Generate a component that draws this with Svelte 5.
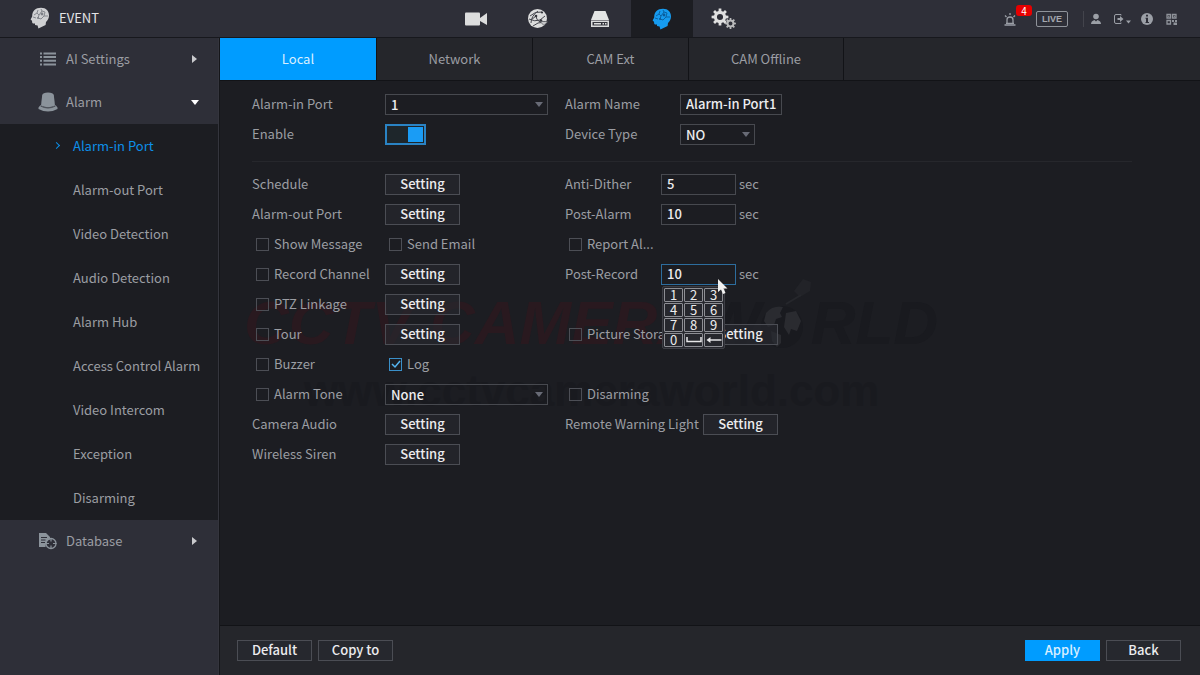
<script lang="ts">
	const menu = [
		'Alarm-in Port',
		'Alarm-out Port',
		'Video Detection',
		'Audio Detection',
		'Alarm Hub',
		'Access Control Alarm',
		'Video Intercom',
		'Exception',
		'Disarming'
	];
	const tabs = ['Local', 'Network', 'CAM Ext', 'CAM Offline'];
	const keys = ['1', '2', '3', '4', '5', '6', '7', '8', '9', '0', 'space', 'back'];

	let page = $state('Alarm-in Port');
	let tab = $state('Local');
	let enabled = $state(true);
	let antiDither = $state('5');
	let postAlarm = $state('10');
	let postRecord = $state('10');

	function press(key: string) {
		if (key === 'back') postRecord = postRecord.slice(0, -1);
		else if (key === 'space') postRecord += ' ';
		else postRecord += key;
	}

	// outline of a cog wheel centred on cx, cy
	function gear(cx: number, cy: number, r: number, teeth: number) {
		let d = '';
		for (let i = 0; i < teeth; i++) {
			[
				[-0.3, 0.72],
				[-0.2, 1],
				[0.2, 1],
				[0.3, 0.72]
			].forEach(([off, k], j) => {
				const a = ((i + off) / teeth) * Math.PI * 2;
				const x = (cx + Math.cos(a) * r * k).toFixed(2);
				const y = (cy + Math.sin(a) * r * k).toFixed(2);
				d += (i + j === 0 ? 'M' : 'L') + x + ' ' + y;
			});
		}
		const h = r * 0.36;
		return `${d}Z M${cx - h} ${cy}a${h} ${h} 0 1 0 ${h * 2} 0a${h} ${h} 0 1 0 ${-h * 2} 0Z`;
	}
</script>

{#snippet head(fill: string, line: string)}
	<svg width="20" height="22" viewBox="0 0 20 22" aria-hidden="true">
		<path
			d="M5 18V16.400L3 16.400C2 16.200 2.200 15 2 13.800L.6 12.400 2.200 9.600C2 4 5.600.8 11 .8 16.200.8 19 4.200 19 8.400 19 11.600 17.600 13 16 15L15.600 18 8.400 21.600 7.600 18.400Z"
			{fill}
		/>
		<path
			d="M4 8L7 6 9 8 12 4 15 5M9 8L8 11 11 12 14 9 18 9M7 6L8 3M12 4L11 2M14 9L15 5M3 10L6 11"
			fill="none"
			stroke={line}
			stroke-width="0.9"
		/>
		<circle cx="12" cy="7" r="1.400" fill={line} />
		<circle cx="8" cy="11" r="1" fill={line} />
	</svg>
{/snippet}

{#snippet check(label: string, checked = false)}
	<label class="check">
		<input type="checkbox" {checked} />
		<span>{label}</span>
	</label>
{/snippet}

<div class="app">
	<header>
		<div class="brand">
			{@render head('#cfd0d2', '#7d8087')}
			<h1>EVENT</h1>
		</div>
		<nav class="modules" aria-label="Modules">
			<button aria-label="Camera">
				<svg width="24" height="16" viewBox="0 0 24 16">
					<rect x="1" y="1.500" width="15" height="13" rx="1" fill="#dcdddd" />
					<path d="M16 7L23 2V14L16 10Z" fill="#dcdddd" />
				</svg>
			</button>
			<button aria-label="Network">
				<svg width="22" height="22" viewBox="0 0 22 22">
					<circle cx="10.500" cy="10.500" r="9.500" fill="#dcdddd" />
					<path
						d="M3 8Q8 3 15 4M4 15Q4 8 11 3M9 8Q9 12 13 14M2 11Q8 14 13 12L18 8M6 18Q10 14 18 14M9 8L4 12"
						fill="none"
						stroke="#44454d"
						stroke-width="1"
					/>
					<circle cx="9" cy="8" r="1.300" fill="#34353c" />
					<circle cx="14" cy="12.500" r="1.300" fill="#34353c" />
					<circle cx="15" cy="4.500" r="1.100" fill="#34353c" />
					<path d="M13 13.500H21L17 17.500Z" fill="#c4c5c7" stroke="#34353c" stroke-width="0.600" />
				</svg>
			</button>
			<button aria-label="Storage">
				<svg width="20" height="18" viewBox="0 0 20 18">
					<path d="M4.500 1H15.500L19 10H1Z" fill="#e4e5e5" />
					<path d="M1 10.500H19V17H1Z" fill="#dcdddd" />
					<path d="M2.500 12H17.500V15.500H2.500Z" fill="#34353c" />
					<path d="M4 13.800H11M12.500 13.800H14M15 13.800H16.500" stroke="#dcdddd" stroke-width="1.500" />
				</svg>
			</button>
			<button class="on" aria-label="Event">{@render head('#169bef', '#0a5d9c')}</button>
			<button aria-label="System">
				<svg width="26" height="22" viewBox="0 0 26 22">
					<path d={gear(9, 9, 8.5, 8)} fill="#e0e0e0" fill-rule="evenodd" />
					<path d={gear(19.5, 15.5, 5.5, 8)} fill="#b9babb" fill-rule="evenodd" />
				</svg>
			</button>
		</nav>
		<div class="tools">
			<button class="bell" aria-label="Alarms, 4 new">
				<svg width="12" height="14" viewBox="0 0 12 14" fill="none" stroke="#9b9fa6">
					<path d="M.5 13H11.500M3 11V8Q3 5 6 5T9 8V11M2 11.300H10M6 1V3M1 3.500L2.500 5M11 3.500L9.500 5" stroke-width="1.300" />
				</svg>
				<span class="count">4</span>
			</button>
			<button class="live">LIVE</button>
			<span class="bar"></span>
			<button aria-label="User">
				<svg width="12" height="12" viewBox="0 0 12 12" fill="#9b9fa6">
					<circle cx="6" cy="3.500" r="2.800" />
					<path d="M1 11Q1 8 4.500 7L6 8.500 7.500 7Q11 8 11 11Z" />
				</svg>
			</button>
			<button aria-label="Log out">
				<svg width="19" height="12" viewBox="0 0 19 12">
					<path d="M9 2.500V1.500H4Q2.500 1.500 2.500 3V9Q2.500 10.500 4 10.500H9V9.500" fill="none" stroke="#9b9fa6" />
					<path d="M5.500 5H8V3L11.500 6 8 9V7H5.500ZM14 7.500H19L16.500 10.500Z" fill="#9b9fa6" />
				</svg>
			</button>
			<button aria-label="About">
				<svg width="12" height="12" viewBox="0 0 12 12">
					<circle cx="6" cy="6" r="6" fill="#9b9fa6" />
					<path d="M5 1.800H7V3.600H5ZM4.500 4.800H7V9H8V10H4.500V9H5V5.800H4.500Z" fill="#2e2f38" />
				</svg>
			</button>
			<button class="qr" aria-label="QR code">
				<svg width="11" height="12" viewBox="0 0 11 12">
					<path
						d="M1 1.500H4.500V5H1ZM6.500 1.500H10V5H6.500ZM1 7.500H4.500V11H1Z"
						fill="none"
						stroke="#8f939a"
						stroke-width="1.300"
					/>
					<path d="M6 7H8V9H6ZM9 7H11V9H9ZM7.500 9.500H11V12H7.500ZM2.200 2.700H3.400V4H2.200ZM7.700 2.700H8.900V4H7.700Z" fill="#8f939a" />
				</svg>
			</button>
		</div>
	</header>

	<div class="body">
		<aside>
			<button class="group">
				<svg width="18" height="14" viewBox="0 0 18 14" stroke="#8b939b" stroke-width="2">
					<path d="M1 1.500H3M1 5H3M1 8.700H3M1 12.500H3M4.500 1.500H17M4.500 5H17M4.500 8.700H17M4.500 12.500H17" />
				</svg>
				<span>AI Settings</span>
				<i class="arrow right"></i>
			</button>
			<button class="group">
				<svg width="20" height="20" viewBox="0 0 20 20" fill="#8b939b">
					<path d="M3 13.500L4.200 3Q4.800.5 10 .5T15.800 3L17 13.500Q10 17 3 13.500Z" />
					<path d="M2.500 13Q10 18 17.500 13L19.500 15.500V17Q10 22 .5 17V15.500Z" />
					<path d="M2.500 14Q10 18 17.500 14" fill="none" stroke="#2e2f38" stroke-width="0.700" />
				</svg>
				<span>Alarm</span>
				<i class="arrow down"></i>
			</button>
			<ul>
				{#each menu as item}
					<li>
						<a href="#{item}" class:active={item === page} onclick={() => (page = item)}>{item}</a>
					</li>
				{/each}
			</ul>
			<button class="group">
				<svg width="20" height="18" viewBox="0 0 20 18" fill="none">
					<path d="M1 1H8L12 5V7.500Q8 8 7.500 15H1Z" fill="#8b939b" />
					<path d="M3 5.500H9M3 8H7.500M3 10.500H7" stroke="#2e2f38" />
					<circle cx="13" cy="11.500" r="5" stroke="#8b939b" stroke-width="1.300" />
					<path d="M13 6V9.500M13 13.500V17M7.500 11.500H11M15 11.500H18.500" stroke="#8b939b" stroke-width="1.200" />
				</svg>
				<span>Database</span>
				<i class="arrow right"></i>
			</button>
		</aside>

		<main>
			<nav class="tabs" aria-label="Source">
				{#each tabs as name}
					<button class:selected={name === tab} onclick={() => (tab = name)}>{name}</button>
				{/each}
			</nav>

			<form onsubmit={(e) => e.preventDefault()}>
				<div class="watermark" aria-hidden="true">
					<div class="mark">
						<span class="red">CCTV CAMERA</span>
						<span>W</span>
						<svg width="50" height="76" viewBox="0 0 50 76">
							<circle cx="21" cy="50" r="21" fill="#191a1f" />
							<path
								d="M5 36Q12 28 22 30L19 36 21 40 15 42 13 48 7 50 3 44ZM25 36L35 34 40 44 36 54 30 52 28 58 23 50ZM10 54L20 58 20 66 16 70 11 64Z"
								fill="#2a2b30"
							/>
							<path d="M33 14L42 2 50 5 49 14 39 20Z" fill="#222328" />
							<path d="M25 27L40 18" stroke="#26272c" stroke-width="2" />
						</svg>
						<span>RLD</span>
					</div>
					<div class="site">www.cctvcameraworld.com</div>
				</div>

				<div class="row">
					<label for="port">Alarm-in Port</label>
					<div><select id="port" class="wide"><option>1</option></select></div>
					<div class="pair name">
						<label for="alarm-name">Alarm Name</label>
						<input id="alarm-name" class="long" value="Alarm-in Port1" />
					</div>
				</div>
				<div class="row">
					<label for="enable">Enable</label>
					<div><input id="enable" class="switch" type="checkbox" role="switch" bind:checked={enabled} /></div>
					<div class="pair name">
						<label for="device">Device Type</label>
						<select id="device"><option>NO</option><option>NC</option></select>
					</div>
				</div>

				<hr />

				<div class="row">
					<span>Schedule</span>
					<div><button class="btn">Setting</button></div>
					<div class="pair">
						<label for="dither">Anti-Dither</label>
						<input id="dither" bind:value={antiDither} />
						<span>sec</span>
					</div>
				</div>
				<div class="row">
					<span>Alarm-out Port</span>
					<div><button class="btn">Setting</button></div>
					<div class="pair">
						<label for="post-alarm">Post-Alarm</label>
						<input id="post-alarm" bind:value={postAlarm} />
						<span>sec</span>
					</div>
				</div>
				<div class="row">
					{@render check('Show Message')}
					{@render check('Send Email')}
					{@render check('Report Al...')}
				</div>
				<div class="row">
					{@render check('Record Channel')}
					<div><button class="btn">Setting</button></div>
					<div class="pair">
						<label for="post-record">Post-Record</label>
						<div class="field">
							<input id="post-record" class="focused" bind:value={postRecord} />
							<div class="keypad">
								{#each keys as key}
									<button type="button" aria-label={key} onclick={() => press(key)}>
										{#if key === 'space'}
											<svg width="16" height="6" viewBox="0 0 16 6">
												<path d="M1 0V4.500H15V0" fill="none" stroke="#e6e6e8" stroke-width="1.500" />
											</svg>
										{:else if key === 'back'}
											<svg width="16" height="8" viewBox="0 0 16 8">
												<path d="M2 4H15.500" stroke="#e6e6e8" stroke-width="1.500" />
												<path d="M.5 4L4.500 1V7Z" fill="#e6e6e8" />
											</svg>
										{:else}
											{key}
										{/if}
									</button>
								{/each}
							</div>
							<svg class="cursor" width="12" height="18" viewBox="0 0 12 18" aria-hidden="true">
								<path d="M1 1V14L4 11.500 6 16 8.500 15 6.500 10.500H10.500Z" fill="#f2f2f2" />
							</svg>
						</div>
						<span>sec</span>
					</div>
				</div>
				<div class="row">
					{@render check('PTZ Linkage')}
					<div><button class="btn">Setting</button></div>
				</div>
				<div class="row">
					{@render check('Tour')}
					<div><button class="btn">Setting</button></div>
					<div class="pair storage">
						{@render check('Picture Storage')}
						<button class="btn">Setting</button>
					</div>
				</div>
				<div class="row">
					{@render check('Buzzer')}
					{@render check('Log', true)}
				</div>
				<div class="row">
					{@render check('Alarm Tone')}
					<div><select class="wide" aria-label="Alarm Tone"><option>None</option></select></div>
					{@render check('Disarming')}
				</div>
				<div class="row">
					<span>Camera Audio</span>
					<div><button class="btn">Setting</button></div>
					<div class="pair storage">
						<span>Remote Warning Light</span>
						<button class="btn">Setting</button>
					</div>
				</div>
				<div class="row">
					<span>Wireless Siren</span>
					<div><button class="btn">Setting</button></div>
				</div>
			</form>

			<footer>
				<button class="btn">Default</button>
				<button class="btn">Copy to</button>
				<span class="space"></span>
				<button class="btn apply">Apply</button>
				<button class="btn">Back</button>
			</footer>
		</main>
	</div>
</div>

<style>
	:global(body) {
		margin: 0;
		background: #1c1d22;
	}
	.app {
		display: flex;
		flex-direction: column;
		min-height: 100vh;
		color: #9b9da3;
		font: 400 13px/20px 'Noto Sans CJK SC', 'Noto Sans', sans-serif;
	}
	.app * {
		box-sizing: border-box;
	}
	button,
	input,
	select {
		margin: 0;
		padding: 0;
		border: 0;
		border-radius: 0;
		background: none;
		color: inherit;
		font: inherit;
	}
	button {
		cursor: pointer;
	}
	svg {
		display: block;
	}

	header {
		display: flex;
		align-items: stretch;
		height: 38px;
		background: #2e2f38;
		border-bottom: 1px solid #17181d;
	}
	.brand {
		display: flex;
		flex: 1;
		align-items: center;
		gap: 9px;
		padding: 0 0 2px 30px;
		color: #e4e4e6;
	}
	h1 {
		margin: 0;
		font-size: 13px;
		font-weight: 400;
	}
	.modules {
		display: flex;
		margin-right: 8px;
	}
	.modules button {
		display: flex;
		align-items: center;
		justify-content: center;
		width: 62px;
	}
	.modules .on {
		background: #1c1d22;
	}
	.tools {
		display: flex;
		flex: 1;
		align-items: center;
		justify-content: flex-end;
		gap: 10px;
		padding-right: 23px;
	}
	.bell {
		position: relative;
		margin-right: 10px;
	}
	.count {
		position: absolute;
		top: -7px;
		left: 12px;
		width: 16px;
		height: 11px;
		border-radius: 3px;
		background: #e60000;
		color: #fff;
		font-size: 10px;
		line-height: 11px;
	}
	.live {
		width: 32px;
		height: 16px;
		border: 1px solid #8f939a;
		border-radius: 2px;
		color: #a5a8ae;
		font: bold 9px/14px 'Liberation Sans', sans-serif;
	}
	.bar {
		width: 1px;
		height: 16px;
		margin: 0 -4px 0 5px;
		background: #43444c;
	}
	.qr {
		margin-left: 3px;
	}

	.body {
		display: flex;
		flex: 1;
	}
	aside {
		width: 219px;
		background: #2e2f38;
		border-right: 1px solid #34353d;
	}
	.group {
		display: flex;
		align-items: center;
		width: 100%;
		height: 43px;
		padding: 0 19px 1px 38px;
		text-align: left;
	}
	.group svg {
		width: 20px;
	}
	.group span {
		flex: 1;
		padding-left: 8px;
	}
	.arrow {
		border: 4px solid transparent;
	}
	.right {
		border-left: 5px solid #c9cacd;
		border-right: 0;
		margin-right: 2px;
	}
	.down {
		border-top: 5px solid #fff;
		border-bottom: 0;
	}
	ul {
		margin: 0;
		padding: 0;
		list-style: none;
		background: #1c1d22;
	}
	li a {
		position: relative;
		display: block;
		padding-left: 73px;
		color: #9b9da3;
		line-height: 44px;
		text-decoration: none;
	}
	li .active {
		color: #0c8fe8;
	}
	.active::before {
		content: '';
		position: absolute;
		top: 19px;
		left: 54px;
		width: 4px;
		height: 4px;
		border: solid #0c8fe8;
		border-width: 1px 1px 0 0;
		transform: rotate(45deg);
	}

	main {
		display: flex;
		flex: 1;
		flex-direction: column;
		min-width: 0;
		border-left: 1px solid #15161a;
		background: #1c1d22;
	}
	.tabs {
		display: flex;
		height: 43px;
		background: #25262b;
		border-bottom: 1px solid #121317;
	}
	.tabs button {
		width: 156px;
	}
	.tabs button + button {
		border-left: 1px solid #121317;
	}
	.tabs button:last-child {
		border-right: 1px solid #121317;
	}
	.tabs .selected {
		background: #009cff;
		color: #d9efff;
	}

	form {
		position: relative;
		flex: 1;
		padding: 8px 68px 20px 32px;
	}
	.row {
		position: relative;
		display: grid;
		grid-template-columns: 133px 180px 1fr;
		align-items: center;
		height: 30px;
	}
	.pair {
		display: flex;
		align-items: center;
	}
	.pair > label:first-child {
		width: 96px;
	}
	.name > label:first-child {
		width: 115px;
	}
	.pair > span:last-child {
		margin-left: 3px;
	}
	.pair.storage > :first-child {
		width: 138px;
		white-space: nowrap;
	}
	hr {
		margin: 12px 0 7px;
		border: 0;
		border-top: 1px solid #26272c;
	}
	input:not([type]),
	select {
		display: block;
		width: 75px;
		height: 21px;
		padding: 0 0 2px 5px;
		border: 1px solid #47494f;
		outline: 0;
		color: #ececee;
		font-weight: 500;
	}
	select {
		appearance: none;
		background: url("data:image/svg+xml,%3Csvg xmlns='http://www.w3.org/2000/svg' width='8' height='5'%3E%3Cpath d='M0 0H8L4 5Z' fill='%23686b76'/%3E%3C/svg%3E")
			no-repeat right 4px center;
	}
	option {
		background: #25262b;
	}
	.wide {
		width: 163px;
	}
	input.long {
		width: 102px;
	}
	input.focused {
		border-color: #2d6d9e;
	}
	.btn {
		display: block;
		width: 75px;
		height: 21px;
		padding-bottom: 2px;
		border: 1px solid #4b4d54;
		background: rgb(40 41 48 / 60%);
		color: #ececee;
		font-weight: 500;
		line-height: 17px;
	}
	.switch {
		appearance: none;
		display: block;
		width: 41px;
		height: 21px;
		border: 2px solid #2a83c4;
		background: linear-gradient(#1a9cf5, #1a9cf5) no-repeat 2px 1px / 15px 15px #1e262b;
	}
	.switch:checked {
		background-position: 21px 1px;
	}
	.check {
		display: flex;
		align-items: center;
		gap: 5px;
		padding-left: 4px;
	}
	.check input {
		appearance: none;
		width: 13px;
		height: 13px;
		border: 1px solid #4c4e55;
	}
	.check input:checked {
		border-color: #3a8fc9;
		background: url("data:image/svg+xml,%3Csvg xmlns='http://www.w3.org/2000/svg' width='11' height='11'%3E%3Cpath d='M2 5L5 8L10 2' fill='none' stroke='%2355b4f0' stroke-width='1.5'/%3E%3C/svg%3E");
	}

	.field {
		position: relative;
	}
	.keypad {
		position: absolute;
		z-index: 2;
		top: 22px;
		left: 1px;
		display: grid;
		grid-template-columns: repeat(3, 19px);
		gap: 1px;
		padding: 1px;
		border: 1px solid #3d3e45;
		border-radius: 2px;
		background: #26272d;
	}
	.keypad button {
		display: flex;
		align-items: center;
		justify-content: center;
		height: 14px;
		border: 1px solid #8d8e94;
		border-radius: 1px;
		color: #ececee;
		line-height: 12px;
	}
	.cursor {
		position: absolute;
		z-index: 3;
		top: 14px;
		left: 56px;
	}

	.watermark {
		position: absolute;
		top: 196px;
		left: 24px;
		font-family: 'Liberation Sans', sans-serif;
		font-weight: bold;
		color: #191a1f;
		white-space: nowrap;
		pointer-events: none;
	}
	.mark {
		display: flex;
		align-items: center;
		font-size: 62px;
		font-style: italic;
		line-height: 76px;
	}
	.mark svg {
		margin-bottom: 16px;
	}
	.red {
		color: #29191f;
	}
	.site {
		padding-left: 60px;
		font-size: 44px;
		line-height: 44px;
	}

	footer {
		display: flex;
		align-items: center;
		gap: 6px;
		height: 50px;
		padding: 0 19px 1px 17px;
		border-top: 1px solid #121317;
		background: #25262b;
	}
	.space {
		flex: 1;
	}
	footer .apply {
		border-color: #009cff;
		background: #009cff;
		color: #d9efff;
	}
</style>
